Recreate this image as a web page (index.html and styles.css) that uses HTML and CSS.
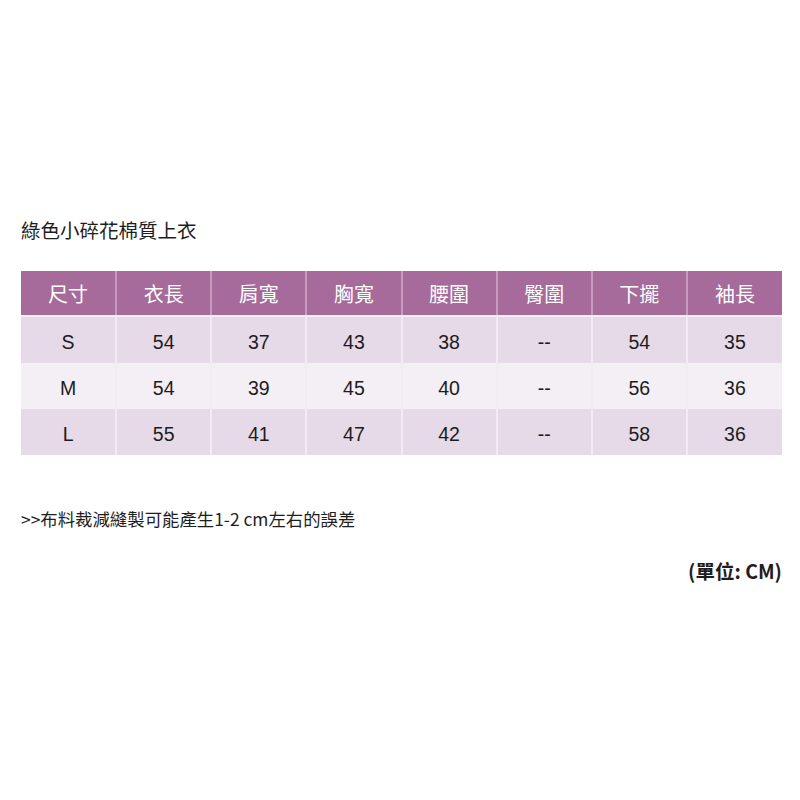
FILE: index.html
```html
<!DOCTYPE html>
<html lang="zh-Hant">
<head>
<meta charset="utf-8">
<link rel="stylesheet" href="styles.css">
</head>
<body>
<div class="page">
  <h1 class="title">綠色小碎花棉質上衣</h1>
  <table class="size">
    <thead>
      <tr><th>尺寸</th><th>衣長</th><th>肩寬</th><th>胸寬</th><th>腰圍</th><th>臀圍</th><th>下擺</th><th>袖長</th></tr>
    </thead>
    <tbody>
      <tr class="odd"><td>S</td><td>54</td><td>37</td><td>43</td><td>38</td><td>--</td><td>54</td><td>35</td></tr>
      <tr class="even"><td>M</td><td>54</td><td>39</td><td>45</td><td>40</td><td>--</td><td>56</td><td>36</td></tr>
      <tr class="odd"><td>L</td><td>55</td><td>41</td><td>47</td><td>42</td><td>--</td><td>58</td><td>36</td></tr>
    </tbody>
  </table>
  <p class="note">&gt;&gt;布料裁減縫製可能產生1-2 cm左右的誤差</p>
  <p class="unit">(單位: CM)</p>
</div>
</body>
</html>
```

FILE: styles.css
```css
html, body {
  margin: 0;
  padding: 0;
  background: #ffffff;
}
.page {
  padding: 218px 18px 0 21px;
  font-family: "Noto Sans CJK TC", "Noto Sans", sans-serif;
  color: #222222;
}
.title {
  margin: 0;
  font-size: 19.5px;
  line-height: 24px;
  font-weight: 400;
  color: #1e1e1e;
}
.size {
  margin-top: 29px;
  width: 761px;
  border-collapse: collapse;
  table-layout: fixed;
}
.size th {
  background: #a66a9b;
  color: #ffffff;
  font-weight: 400;
  font-size: 20px;
  height: 44px;
  padding: 0;
  border-right: 2px solid #c79bbf;
  border-bottom: 2px solid #f4eef5;
  font-family: "Noto Sans CJK TC", sans-serif;
}
.size td {
  padding: 5px 0 0 0;
  height: 41px;
  text-align: center;
  font-family: "Liberation Sans", Arial, sans-serif;
  font-size: 19.5px;
  color: #1c1c1c;
  border-right: 2px solid #f2ebf3;
}
.size th:last-child, .size td:last-child {
  border-right: none;
}
.size tr.odd td {
  background: #e6d9e8;
}
.size tr.even td {
  background: #f3eff4;
}
.note {
  margin: 52px 0 0 0;
  font-size: 17.4px;
  line-height: 24px;
  color: #1e1e1e;
}
.unit {
  margin: 27px 0 0 0;
  text-align: right;
  font-size: 19.5px;
  line-height: 26px;
  font-weight: 600;
  color: #1e1e1e;
}
```
